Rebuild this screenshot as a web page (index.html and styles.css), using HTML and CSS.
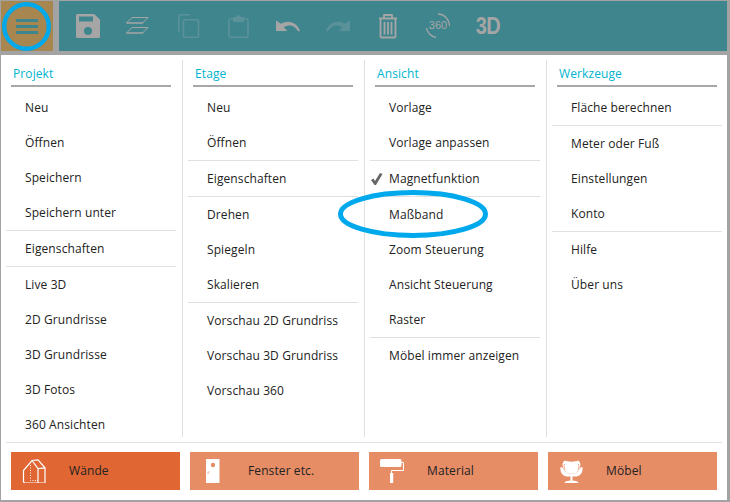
FILE: index.html
```html
<!DOCTYPE html>
<html lang="de">
<head>
    <meta charset="UTF-8">
    <meta name="viewport" content="width=device-width, initial-scale=1.0">
    <title>Menü</title>
    <link rel="stylesheet" href="styles.css">
</head>
<body>
    <div class="app">
        <div class="toolbar">
            <div class="menu-button">
                <svg class="menu-icon" width="22" height="15" viewBox="0 0 22 15"><path d="M0 0h22v3H0zM0 6h22v3H0zM0 12h22v3H0z" fill="#3f858e"/></svg>
                <svg class="menu-ring" width="54" height="54" viewBox="0 0 54 54"><circle cx="25.500" cy="25.500" r="22.300" fill="none" stroke="#00a8ec" stroke-width="4.400"/></svg>
            </div>
            <div class="tools">
                <div class="tool"><svg width="26" height="26" viewBox="0 0 26 26"><path d="M2.500 1H19l6 5.500v17a1.500 1.500 0 0 1-1.500 1.500h-21A1.500 1.500 0 0 1 1 23.500v-21A1.500 1.500 0 0 1 2.500 1z" fill="#a5a5a5"/><path d="M4 3.500h14v5H4z" fill="#3f858e"/><circle cx="13" cy="18" r="4" fill="#3f858e"/></svg></div>
                <div class="tool"><svg width="26" height="26" viewBox="0 0 26 26"><path d="M7 4.500h16l-5.500 5.500H1.500zM7 14.500h16l-5.500 5.500H1.500z" fill="none" stroke="#a5a5a5"/><path d="M1 10.500h17l.8-1H2zM1 20.500h17l.8-1H2z" fill="#a5a5a5"/></svg></div>
                <div class="tool"><svg width="26" height="26" viewBox="0 0 26 26"><path d="M3.800 19V2.500a.8.800 0 0 1 .8-.8H15M9.500 6.700h13a1 1 0 0 1 1 1v15.500a1 1 0 0 1-1 1h-13a1 1 0 0 1-1-1V7.700a1 1 0 0 1 1-1z" fill="none" stroke="#5b9199" stroke-width="1.600"/></svg></div>
                <div class="tool"><svg width="26" height="26" viewBox="0 0 26 26"><path d="M8 6H5a1 1 0 0 0-1 1v16.200a1 1 0 0 0 1 1h17a1 1 0 0 0 1-1V7a1 1 0 0 0-1-1h-3" fill="none" stroke="#5b9199" stroke-width="1.600"/><path d="M8 4h3.500a2 2 0 0 1 4 0H19v5H8z" fill="#5b9199"/></svg></div>
                <div class="tool"><svg width="26" height="26" viewBox="0 0 26 26"><path d="M1 7.500V18h11.500l-3.800-3.700c5-3.300 11-2.500 14.300 3.900l2 -.2C22.500 9.500 13.500 6 6 10.800z" fill="#a5a5a5"/></svg></div>
                <div class="tool"><svg width="26" height="26" viewBox="0 0 26 26"><path d="M25 7.500V18H13.500l3.800-3.700c-5-3.300-11-2.500-14.300 3.900l-2-.2C3.500 9.500 12.500 6 20 10.800z" fill="#5b9199"/></svg></div>
                <div class="tool"><svg width="26" height="26" viewBox="0 0 26 26"><path d="M4 5.500h18M9 5V2h8v3M5.500 6v17.500a1 1 0 0 0 1 1h13a1 1 0 0 0 1-1V6M9.500 9v12.500M13 9v12.500M16.500 9v12.500" fill="none" stroke="#a5a5a5" stroke-width="1.800"/></svg></div>
                <div class="tool tool-360">
                    <svg width="26" height="26" viewBox="0 0 26 26"><path d="M1.500 15c.5 4.500 4.500 8.500 9.500 9.500M13 1c6 0 11 4.500 11.500 12" fill="none" stroke="#a5a5a5" stroke-width="1.300"/></svg>
                    <span class="tool-360-text">360</span>
                </div>
                <div class="tool tool-3d">3D</div>
            </div>
        </div>

        <div class="columns">
            <div class="column">
                <h2>Projekt</h2>
                <a>Neu</a>
                <a>Öffnen</a>
                <a>Speichern</a>
                <a>Speichern unter</a>
                <hr>
                <a>Eigenschaften</a>
                <hr>
                <a>Live 3D</a>
                <a>2D Grundrisse</a>
                <a>3D Grundrisse</a>
                <a>3D Fotos</a>
                <a>360 Ansichten</a>
            </div>
            <div class="column">
                <h2>Etage</h2>
                <a>Neu</a>
                <a>Öffnen</a>
                <hr>
                <a>Eigenschaften</a>
                <hr>
                <a>Drehen</a>
                <a>Spiegeln</a>
                <a>Skalieren</a>
                <hr>
                <a>Vorschau 2D Grundriss</a>
                <a>Vorschau 3D Grundriss</a>
                <a>Vorschau 360</a>
            </div>
            <div class="column">
                <h2>Ansicht</h2>
                <a>Vorlage</a>
                <a>Vorlage anpassen</a>
                <hr>
                <a><svg class="check" width="12" height="12" viewBox="0 0 12 12"><path d="M0 7l2.500-1.500L4 8l5-8 2.500 1L5 12H3.500z" fill="#666"/></svg>Magnetfunktion</a>
                <hr>
                <a>Maßband</a>
                <a>Zoom Steuerung</a>
                <a>Ansicht Steuerung</a>
                <a>Raster</a>
                <hr>
                <a>Möbel immer anzeigen</a>
            </div>
            <div class="column">
                <h2>Werkzeuge</h2>
                <a>Fläche berechnen</a>
                <hr>
                <a>Meter oder Fuß</a>
                <a>Einstellungen</a>
                <a>Konto</a>
                <hr>
                <a>Hilfe</a>
                <a>Über uns</a>
            </div>
        </div>

        <div class="tabs">
            <div class="tab active">
                <svg width="24" height="24" viewBox="0 0 24 24"><path d="M1.500 11.500L10 1.500 16 .8l7 8V24H2.500l-1-1zM10 1.500l6 8 7-.7M16 9.500V24" fill="none" stroke="#fff" stroke-width="1.200"/><path d="M8.500 6v15.500H16" fill="none" stroke="#fff" stroke-dasharray="1 1.500"/></svg>
                <span>Wände</span>
            </div>
            <div class="tab">
                <svg width="24" height="24" viewBox="0 0 24 24"><path d="M5 0h13.500v24H5z" fill="#fff"/><circle cx="12" cy="6" r="2.200" fill="#e68d66"/><path d="M6.500 12.500h2v1h-1v1.500h-1z" fill="#e8b9a0"/></svg>
                <span>Fenster etc.</span>
            </div>
            <div class="tab">
                <svg width="24" height="24" viewBox="0 0 24 24"><path d="M1.500 0H20a1.500 1.500 0 0 1 1.500 1.500v5A1.500 1.500 0 0 1 20 8H1.500A1.500 1.500 0 0 1 0 6.500v-5A1.500 1.500 0 0 1 1.500 0z" fill="#fff"/><path d="M21 3.500h2.500v8h-12v3" fill="none" stroke="#fff"/><path d="M10 14h3.200v9.500a.5.500 0 0 1-.5.500h-2.200a.5.500 0 0 1-.5-.5z" fill="#fff"/></svg>
                <span>Material</span>
            </div>
            <div class="tab">
                <svg width="24" height="24" viewBox="0 0 24 24"><path d="M6 1.500c2 1.500 11 1.500 13 0 3 1.500 3 5.500 1 8.500l-3 4.500H8L5 10C3 7 3 3 6 1.500z" fill="#fff"/><path d="M1.500 8c2 0 3.500 2 4.500 4 .7 1.500 2 2.500 4 2.500h5c2 0 3.300-1 4-2.500 1-2 2.500-4 4.500-4 .5 4-1 9-6 9.500H7.500C2.500 17 1 12 1.500 8z" fill="#fff"/><path d="M6 11C5 9 5 7 5.500 5M19 11c1-2 1-4 .5-6" fill="none" stroke="#e68d66" stroke-width=".7"/><path d="M11.500 17h2v5h-2z" fill="#fff"/><path d="M5.500 24c0-1.500 3-2.500 7-2.500s7 1 7 2.500z" fill="#fff"/></svg>
                <span>Möbel</span>
            </div>
        </div>

        <svg class="highlight" width="156" height="54" viewBox="0 0 156 54"><ellipse cx="78" cy="27" rx="72.500" ry="21.500" fill="none" stroke="#00a8ec" stroke-width="5"/></svg>
    </div>
</body>
</html>
```

FILE: styles.css
```css
* {
    box-sizing: border-box;
}
html, body {
    margin: 0;
    padding: 0;
}
body {
    width: 730px;
    height: 502px;
    overflow: hidden;
    background-color: #a3a3a3;
    font-family: "Open Sans", sans-serif;
    font-size: 12px;
    letter-spacing: 0.1px;
    color: #222;
}
.app {
    position: relative;
    width: 726px;
    height: 500px;
    margin-left: 1px;
    background-color: #fff;
}
.toolbar {
    display: flex;
    height: 55px;
    padding-top: 1px;
    background-color: #a3a3a3;
}
.menu-button {
    position: relative;
    width: 52px;
    height: 50px;
    margin-right: 6px;
    background-color: #a88650;
    display: flex;
    align-items: center;
    justify-content: center;
}
.menu-ring {
    position: absolute;
    left: 0;
    top: 0;
}
.tools {
    flex: 1;
    height: 50px;
    display: flex;
    align-items: center;
    padding-left: 4px;
    background-color: #3f858e;
}
.tool {
    position: relative;
    width: 50px;
    display: flex;
    justify-content: center;
}
.tool-360-text {
    position: absolute;
    left: 0;
    right: 0;
    top: 6px;
    text-align: center;
    font-family: "Liberation Sans", sans-serif;
    font-size: 11px;
    letter-spacing: 0;
    color: #a5a5a5;
}
.tool-3d {
    font-family: "Liberation Sans", sans-serif;
    font-weight: bold;
    font-size: 20px;
    letter-spacing: -0.5px;
    color: #a5a5a5;
    transform: scaleY(1.15);
}
.columns {
    display: flex;
    height: 387px;
    padding-top: 5px;
}
.column {
    flex: none;
    width: 182px;
    height: 377px;
    padding: 0 6px 0 5px;
    border-right: 1px solid #e0e0e0;
}
.column:last-child {
    width: 180px;
    padding-right: 5px;
    border-right: none;
}
.column h2 {
    margin: 0 5px 3px;
    height: 27px;
    padding: 5px 0 0 2px;
    font-size: 12px;
    font-weight: normal;
    color: #00b4cf;
    border-bottom: 2px solid #a8a8a8;
}
.column a {
    display: flex;
    align-items: center;
    height: 35px;
    padding-left: 19px;
    position: relative;
}
.column hr {
    height: 1px;
    margin: 0;
    border: none;
    background-color: #e0e0e0;
}
.check {
    position: absolute;
    left: 1px;
    top: 12px;
}
.tabs {
    margin: 0 5px;
    height: 58px;
    border-top: 1px solid #e0e0e0;
    padding: 9px 5px 0;
    display: flex;
    gap: 10px;
}
.tab {
    position: relative;
    width: 169px;
    height: 38px;
    display: flex;
    align-items: center;
    padding-left: 11px;
    background-color: #e68d66;
}
.tab.active {
    background-color: #e06733;
}
.tab span {
    position: absolute;
    left: 58px;
    top: 10px;
}
.highlight {
    position: absolute;
    left: 333.5px;
    top: 187px;
}
```
